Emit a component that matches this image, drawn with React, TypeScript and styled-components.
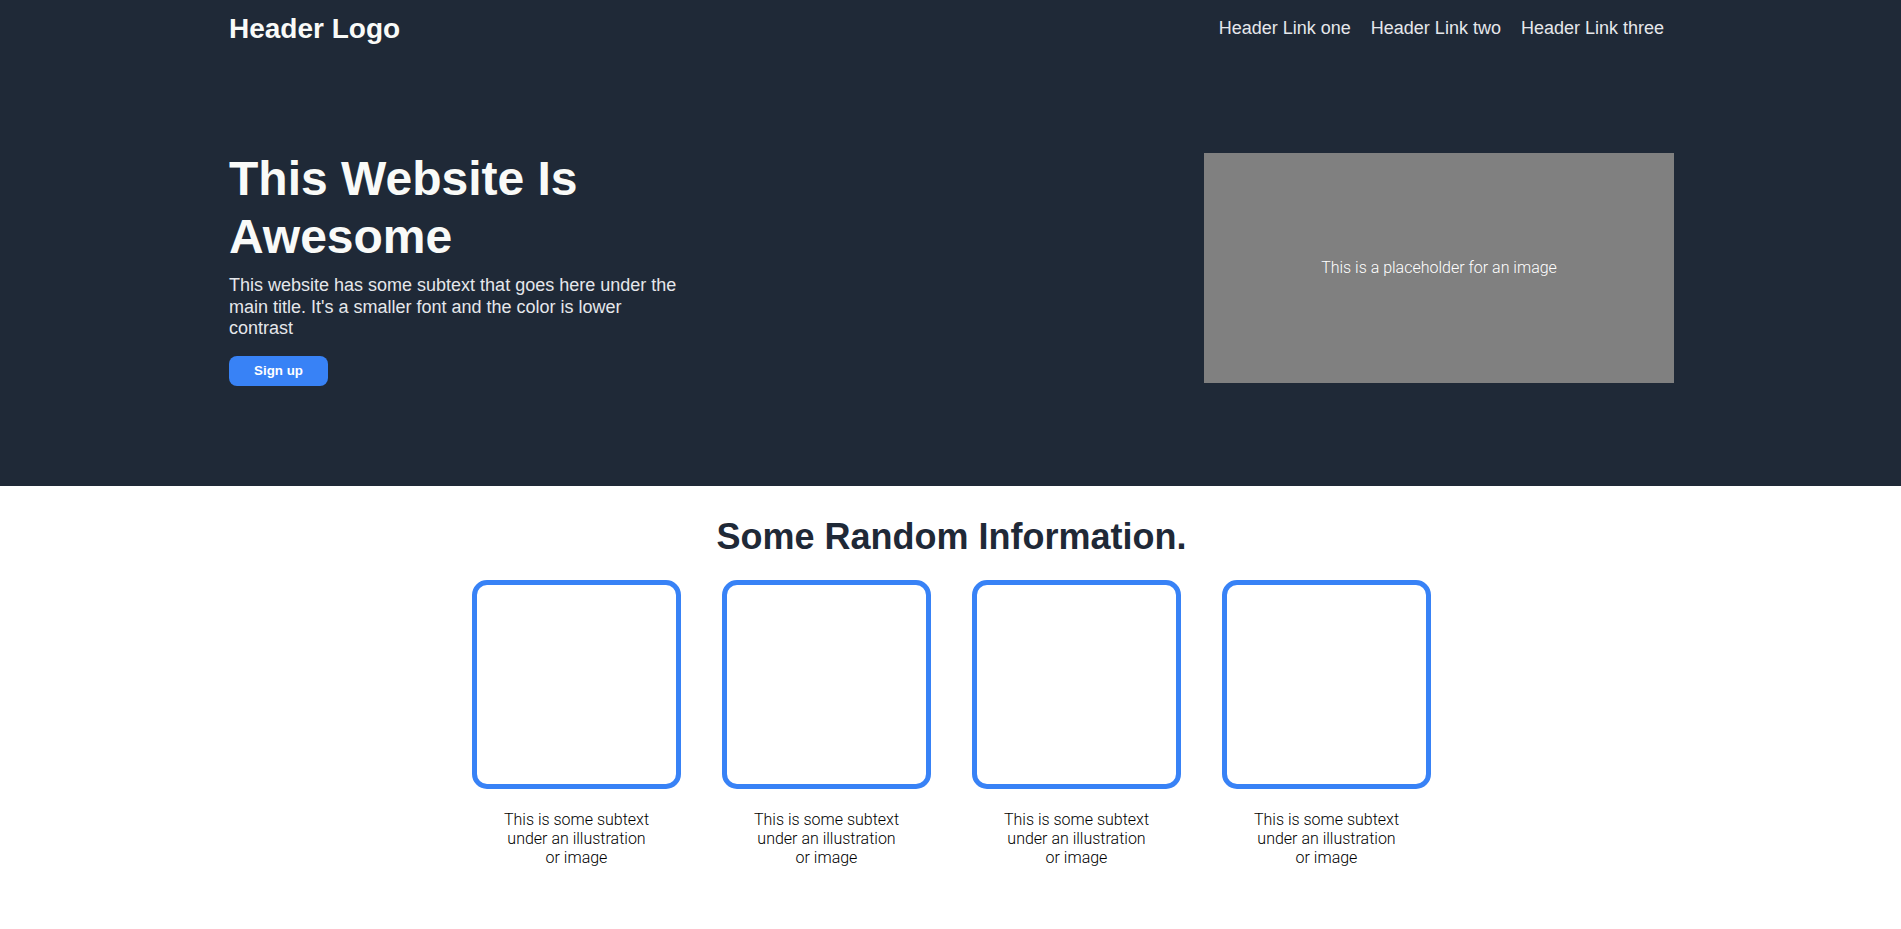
import React from "react";
import styled, { createGlobalStyle } from "styled-components";

const GlobalStyle = createGlobalStyle`
  html, body {
    margin: 0;
    padding: 0;
    background: #ffffff;
  }
  body {
    font-family: "Liberation Sans", Arial, Helvetica, sans-serif;
  }
  * {
    box-sizing: border-box;
  }
`;

const DarkBand = styled.div`
  background: #1f2937;
`;

const Container = styled.div`
  padding: 0 227px 0 229px;
`;

const Header = styled.header`
  height: 57px;
  display: flex;
  align-items: center;
  justify-content: space-between;
`;

const Logo = styled.div`
  font-size: 28px;
  font-weight: 700;
  color: #f9faf8;
`;

const Nav = styled.nav`
  display: flex;
`;

const NavLink = styled.a`
  font-size: 18px;
  color: #e5e7eb;
  text-decoration: none;
  padding: 0 10px;
`;

const Hero = styled.section`
  display: flex;
  align-items: center;
  justify-content: space-between;
  padding: 93px 0 100px;
`;

const HeroText = styled.div`
  width: 450px;
  display: flex;
  flex-direction: column;
  align-items: flex-start;
`;

const Title = styled.h1`
  margin: 0;
  font-size: 48px;
  line-height: 1.2;
  font-weight: 700;
  color: #f9faf8;
`;

const Subtext = styled.p`
  margin: 10px 0 16px;
  font-size: 18px;
  line-height: 21.6px;
  color: #e5e7eb;
`;

const SignUp = styled.button`
  font-family: "Liberation Sans", Arial, sans-serif;
  font-size: 13.33px;
  font-weight: 700;
  color: #ffffff;
  background: #3882f6;
  border: none;
  border-radius: 8px;
  height: 30px;
  width: 99px;
  padding: 0;
  cursor: pointer;
`;

const ImagePlaceholder = styled.div`
  width: 470px;
  height: 230px;
  background: #808080;
  color: #ffffff;
  font-family: Roboto, "Liberation Sans", sans-serif;
  font-weight: 300;
  font-size: 16px;
  display: flex;
  align-items: center;
  justify-content: center;
`;

const InfoSection = styled.section`
  padding: 0 227px 40px 229px;
`;

const InfoTitle = styled.h2`
  margin: 30px 0 22px;
  text-align: center;
  font-size: 36px;
  line-height: 42px;
  font-weight: 700;
  color: #1f2937;
`;

const Cards = styled.div`
  display: flex;
  justify-content: center;
  gap: 41px;
`;

const Card = styled.div`
  width: 209px;
  display: flex;
  flex-direction: column;
  align-items: center;
`;

const Illustration = styled.div`
  width: 209px;
  height: 209px;
  border: 5px solid #3882f6;
  border-radius: 15px;
`;

const CardText = styled.p`
  margin: 21px 0 0;
  width: 150px;
  text-align: center;
  font-family: Roboto, "Liberation Sans", sans-serif;
  font-weight: 300;
  font-size: 16px;
  line-height: 19px;
  color: #000000;
`;

const cards = [1, 2, 3, 4];

export default function App() {
  return (
    <>
      <GlobalStyle />
      <DarkBand>
        <Container>
          <Header>
            <Logo>Header Logo</Logo>
            <Nav>
              <NavLink href="#">Header Link one</NavLink>
              <NavLink href="#">Header Link two</NavLink>
              <NavLink href="#">Header Link three</NavLink>
            </Nav>
          </Header>
          <Hero>
            <HeroText>
              <Title>This Website Is Awesome</Title>
              <Subtext>
                This website has some subtext that goes here under the main
                title. It's a smaller font and the color is lower contrast
              </Subtext>
              <SignUp>Sign up</SignUp>
            </HeroText>
            <ImagePlaceholder>This is a placeholder for an image</ImagePlaceholder>
          </Hero>
        </Container>
      </DarkBand>
      <InfoSection>
        <InfoTitle>Some Random Information.</InfoTitle>
        <Cards>
          {cards.map((c) => (
            <Card key={c}>
              <Illustration />
              <CardText>This is some subtext under an illustration or image</CardText>
            </Card>
          ))}
        </Cards>
      </InfoSection>
    </>
  );
}
